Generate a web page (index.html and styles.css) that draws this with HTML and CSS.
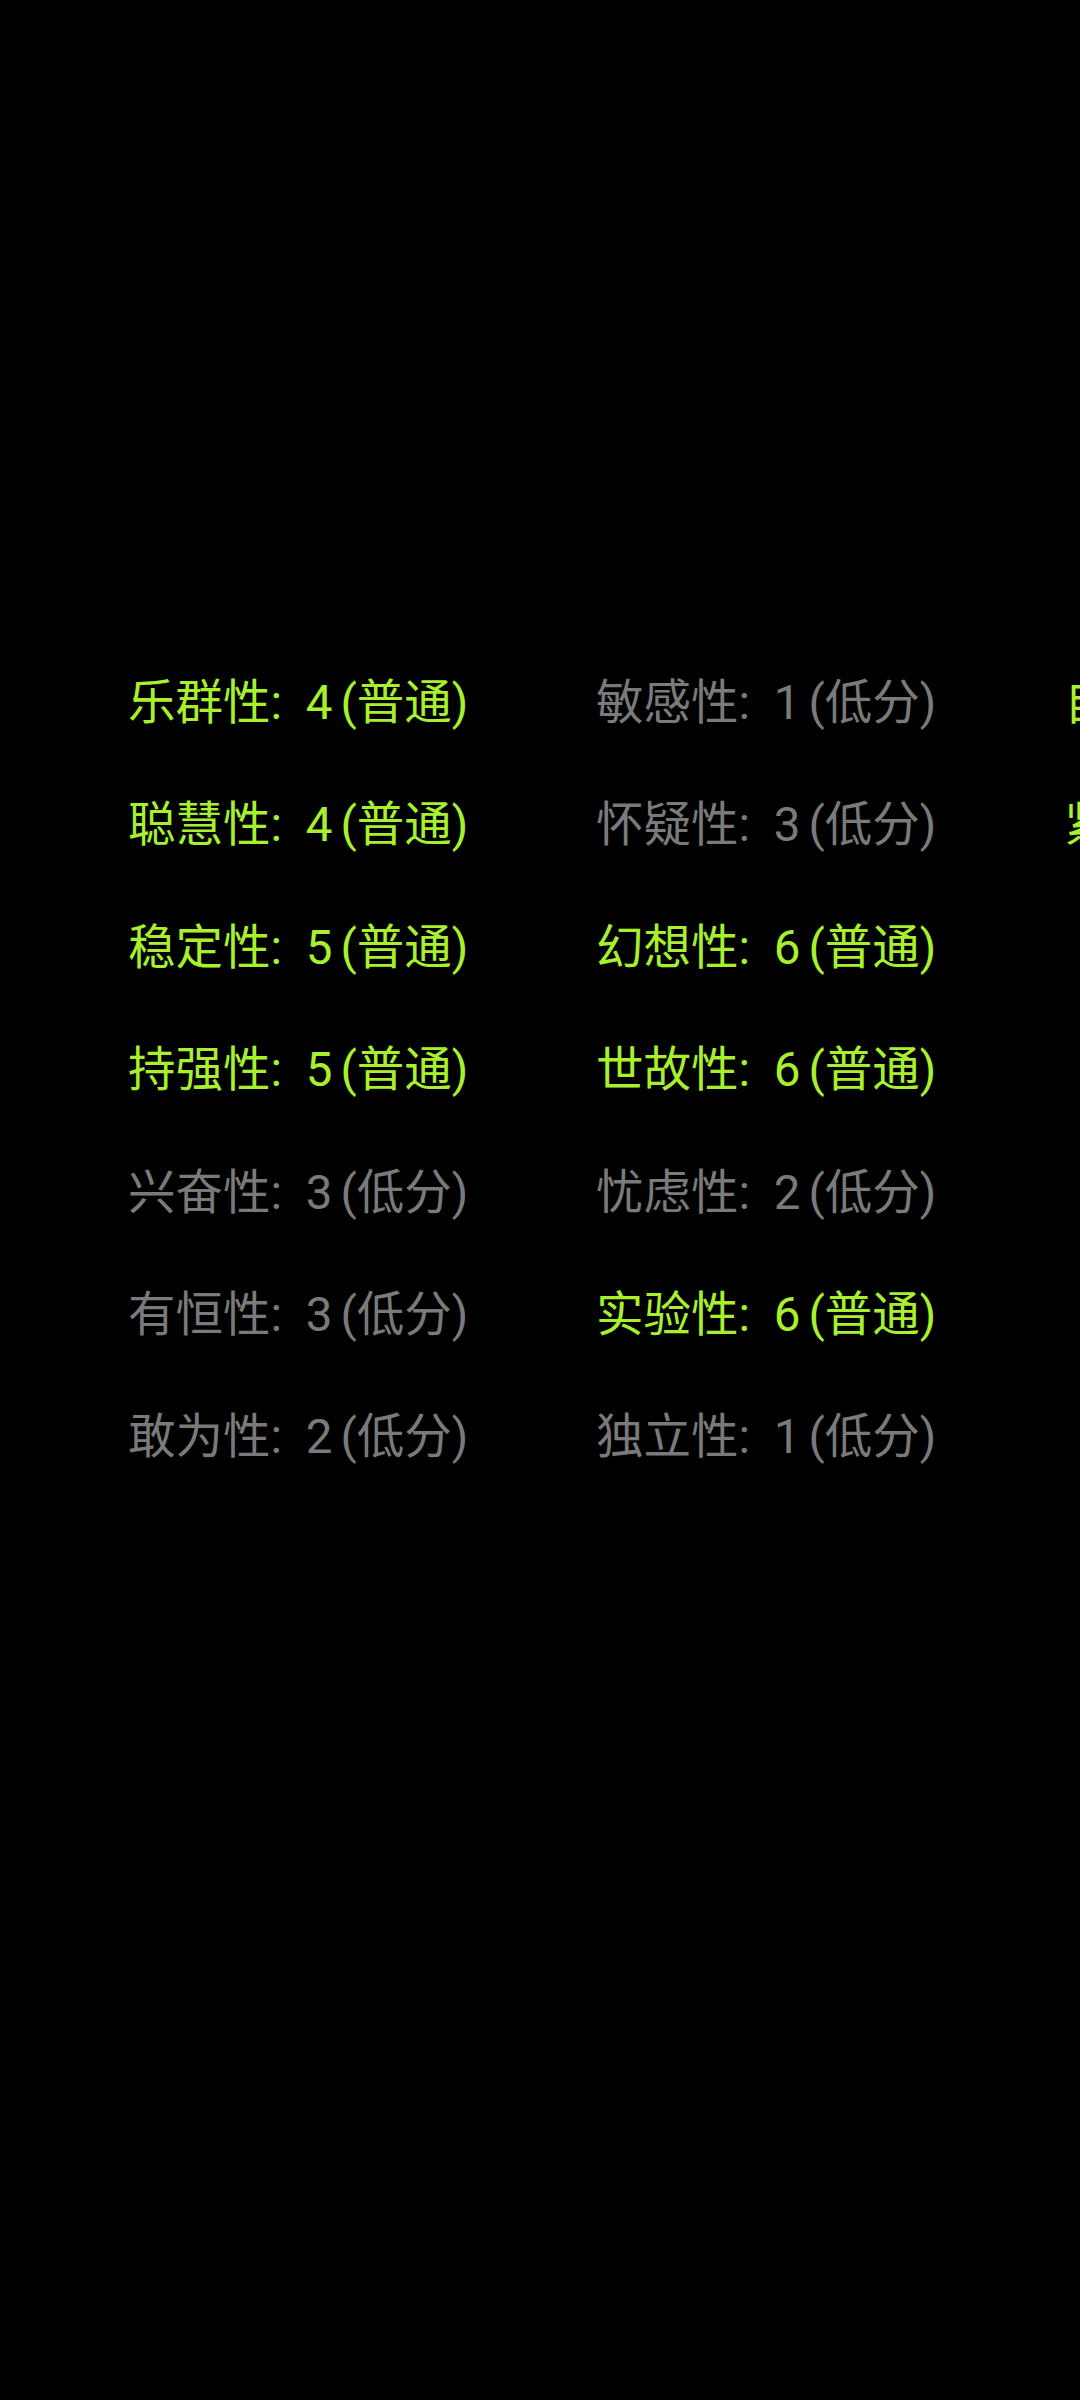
FILE: index.html
```html
<!DOCTYPE html>
<html lang="zh-CN">
<head>
<meta charset="utf-8">
<link rel="stylesheet" href="styles.css">
</head>
<body>
<div class="screen">
  <div class="factors">
    <div class="item hi">乐群性: 4<span class="lvl">(普通)</span></div>
    <div class="item hi">聪慧性: 4<span class="lvl">(普通)</span></div>
    <div class="item hi">稳定性: 5<span class="lvl">(普通)</span></div>
    <div class="item hi">持强性: 5<span class="lvl">(普通)</span></div>
    <div class="item lo">兴奋性: 3<span class="lvl">(低分)</span></div>
    <div class="item lo">有恒性: 3<span class="lvl">(低分)</span></div>
    <div class="item lo">敢为性: 2<span class="lvl">(低分)</span></div>
    <div class="item lo">敏感性: 1<span class="lvl">(低分)</span></div>
    <div class="item lo">怀疑性: 3<span class="lvl">(低分)</span></div>
    <div class="item hi">幻想性: 6<span class="lvl">(普通)</span></div>
    <div class="item hi">世故性: 6<span class="lvl">(普通)</span></div>
    <div class="item lo">忧虑性: 2<span class="lvl">(低分)</span></div>
    <div class="item hi">实验性: 6<span class="lvl">(普通)</span></div>
    <div class="item lo">独立性: 1<span class="lvl">(低分)</span></div>
    <div class="item hi">自律性: 5<span class="lvl">(普通)</span></div>
    <div class="item hi">紧张性: 5<span class="lvl">(普通)</span></div>
  </div>
</div>
</body>
</html>
```
FILE: styles.css
```css
html, body {
  margin: 0;
  padding: 0;
  background: #000;
}
body {
  width: 1080px;
  height: 2400px;
  overflow: hidden;
}
.screen {
  width: 1080px;
  height: 2400px;
  overflow: hidden;
  padding-top: 642px;
  box-sizing: border-box;
}
.factors {
  display: grid;
  grid-auto-flow: column;
  grid-template-rows: repeat(7, 122.4px);
  grid-auto-columns: 468px;
  padding-left: 128px;
  width: max-content;
}
.item {
  font-family: Roboto, "Noto Sans CJK SC", sans-serif;
  font-size: 47.5px;
  line-height: 122.4px;
  white-space: nowrap;
  word-spacing: 12px;
}
.lvl {
  padding-left: 8px;
}
.hi {
  color: #a8f02e;
}
.lo {
  color: #7a7a7a;
}
```
